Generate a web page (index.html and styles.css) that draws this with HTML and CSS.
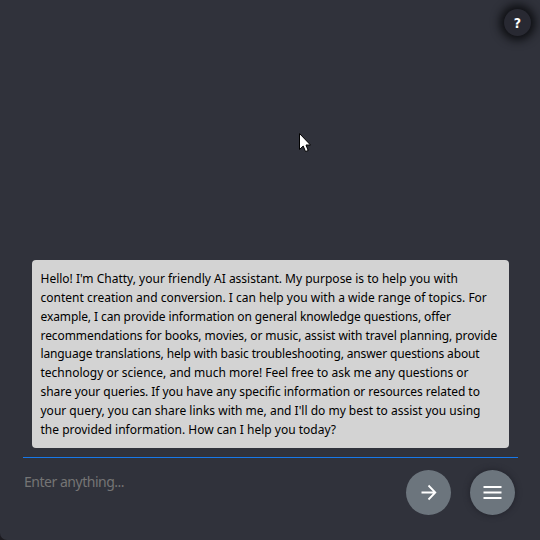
FILE: index.html
```html
<!DOCTYPE html>
<html lang="en">
<head>
<meta charset="utf-8">
<title>Chatty</title>
<link rel="stylesheet" href="styles.css">
</head>
<body>
<main class="app">
  <header class="top"><button class="help">?</button></header>
  <section class="messages">
    <p class="message">
      <span>Hello! I'm Chatty, your friendly AI assistant. My purpose is to help you with</span>
      <span>content creation and conversion. I can help you with a wide range of topics. For</span>
      <span class="tight">example, I can provide information on general knowledge questions, offer</span>
      <span class="snug">recommendations for books, movies, or music, assist with travel planning, provide</span>
      <span class="tighter">language translations, help with basic troubleshooting, answer questions about</span>
      <span>technology or science, and much more! Feel free to ask me any questions or</span>
      <span class="slight">share your queries. If you have any specific information or resources related to</span>
      <span>your query, you can share links with me, and I'll do my best to assist you using</span>
      <span>the provided information. How can I help you today?</span>
    </p>
  </section>
  <footer class="composer">
    <input class="prompt" placeholder="Enter anything...">
    <button class="round" aria-label="Send"><svg width="45" height="45" viewBox="0 0 45 45"><path d="M15.5 22.5H29M22.5 15.5L29.3 22.5L22.5 29.5"/></svg></button>
    <button class="round menu" aria-label="Menu"><svg width="45" height="45" viewBox="0 0 45 45"><path d="M13.5 17H31.5M13.5 22.5H31.5M13.5 28H31.5"/></svg></button>
  </footer>
  <svg class="cursor" width="13" height="21" viewBox="0 0 13 21"><path d="M.5 .5V16.5L4.2 13L6.5 18.5L9.2 17.5L7 12H11.5Z"/></svg>
</main>
</body>
</html>
```
FILE: styles.css
```css
* { box-sizing: border-box; }
body { margin: 0; background: #1c1b20; font-family: "Noto Sans", sans-serif; }
.app { position: relative; display: flex; flex-direction: column; width: 540px; height: 540px; background: #30323b; border-radius: 0 0 0 7px; overflow: hidden; }
.top { display: flex; justify-content: flex-end; padding: 9px 9px 0 0; }
button { border: 0; padding: 0; }
.help { width: 27px; height: 27px; border-radius: 50%; background: #282932; color: #fff; font: bold 14px/28px "DejaVu Sans Condensed", sans-serif; font-stretch: condensed; box-shadow: 0 0 10px 4px #0c0d10; }
.messages { flex: 1; display: flex; align-items: flex-end; padding: 0 31px 9px 32px; }
.message { margin: 0; width: 477px; height: 188px; padding: 10px 8.5px; border-radius: 4px; background: #d3d3d3; color: #000; font: 12px/18.85px "Noto Sans", sans-serif; }
.message span { display: block; white-space: nowrap; }
.message .slight { letter-spacing: -0.05px; }
.message .snug { letter-spacing: -0.075px; }
.message .tight { letter-spacing: -0.1px; }
.message .tighter { letter-spacing: -0.125px; }
.composer { display: flex; height: 83px; margin: 0 22px 0 23px; padding: 12px 2px 0 0; border-top: 1px solid #1778e8; }
.prompt { width: 383px; height: 23px; padding: 0 1px; border: 0; outline: 0; background: transparent; font: 14px "Noto Sans", sans-serif; letter-spacing: -0.48px; }
.prompt::placeholder { color: #757575; opacity: 1; }
.round { width: 45px; height: 45px; border-radius: 50%; background: #6c757d; flex: none; }
.round svg { display: block; fill: none; stroke: #fff; stroke-width: 1.8; }
.menu { margin-left: 19px; box-shadow: 0 0 6px #202129; }
.cursor { position: absolute; left: 299px; top: 133px; fill: #fff; stroke: #000; }
```
